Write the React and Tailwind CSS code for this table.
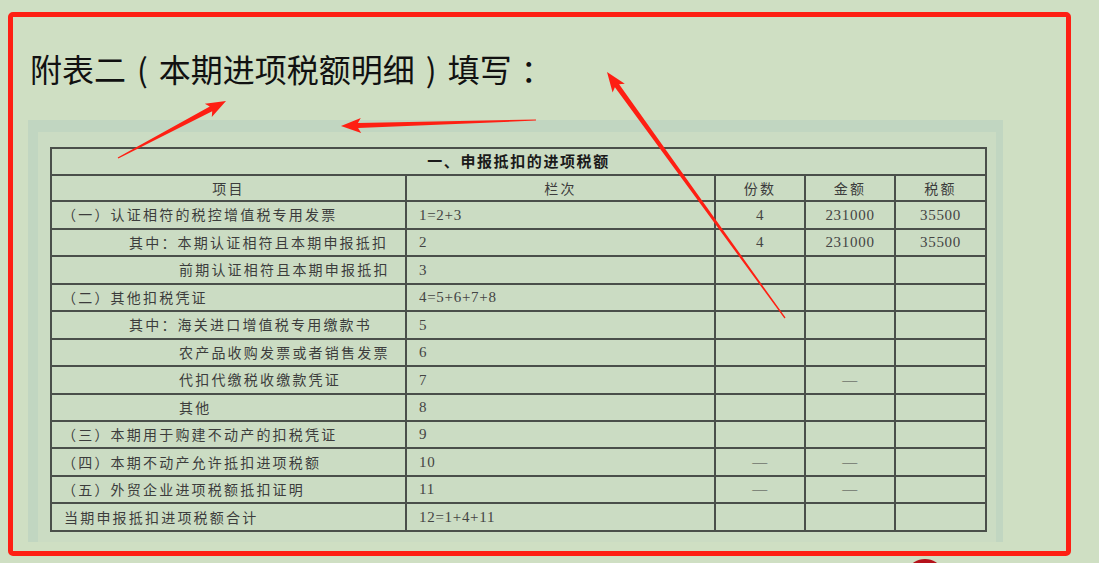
const ROWS = [
  { label: "（一）认证相符的税控增值税专用发票", level: 0, line: "1=2+3", count: "4", amount: "231000", tax: "35500" },
  { label: "其中：本期认证相符且本期申报抵扣", level: 1, line: "2", count: "4", amount: "231000", tax: "35500" },
  { label: "前期认证相符且本期申报抵扣", level: 2, line: "3" },
  { label: "（二）其他扣税凭证", level: 0, line: "4=5+6+7+8" },
  { label: "其中：海关进口增值税专用缴款书", level: 1, line: "5" },
  { label: "农产品收购发票或者销售发票", level: 2, line: "6" },
  { label: "代扣代缴税收缴款凭证", level: 2, line: "7", amount: "—" },
  { label: "其他", level: 2, line: "8" },
  { label: "（三）本期用于购建不动产的扣税凭证", level: 0, line: "9" },
  { label: "（四）本期不动产允许抵扣进项税额", level: 0, line: "10", count: "—", amount: "—" },
  { label: "（五）外贸企业进项税额抵扣证明", level: 0, line: "11", count: "—", amount: "—" },
  { label: "当期申报抵扣进项税额合计", level: 0, line: "12=1+4+11", plain: true },
];

const INDENT = ["pl-[10px]", "pl-[77px]", "pl-[127px]"];

// red annotation arrows: tail -> tip
const ARROWS = [
  { from: [118, 158], to: [226, 101] },
  { from: [536, 120], to: [341, 126] },
  { from: [785, 318], to: [607, 72] },
];

function arrowPoints([tx, ty], [hx, hy]) {
  const dx = hx - tx;
  const dy = hy - ty;
  const len = Math.hypot(dx, dy);
  const ux = dx / len;
  const uy = dy / len;
  const nx = -uy;
  const ny = ux;
  const headLen = 17;
  const bx = hx - ux * headLen;
  const by = hy - uy * headLen;
  const p = (x, y) => `${x.toFixed(1)},${y.toFixed(1)}`;
  return [
    p(tx + nx * 0.6, ty + ny * 0.6),
    p(bx + nx * 2.6, by + ny * 2.6),
    p(bx - ux * 3 + nx * 7.5, by - uy * 3 + ny * 7.5),
    p(hx, hy),
    p(bx - ux * 3 - nx * 7.5, by - uy * 3 - ny * 7.5),
    p(bx - nx * 2.6, by - ny * 2.6),
    p(tx - nx * 0.6, ty - ny * 0.6),
  ].join(" ");
}

const cell = "border-2 border-[#4a4f4a] p-0";
const num = "text-center text-[15px] tracking-[0.7px] text-[#444] [font-family:'Liberation_Serif',serif]";

export default function App() {
  return (
    <div className="relative w-[1099px] h-[563px] overflow-hidden bg-[#cfdfc3] pt-[12px] pl-[8px] [font-family:'Noto_Sans_CJK_SC',sans-serif]">
      <div className="w-[1063px] h-[544px] rounded-[5px] border-[5px] border-[#fe1f13] pt-[29px]">
        <h1 className="pl-[17px] text-[32px] leading-[44px] text-[#111]">
          附表二<span className="mx-[11px]">(</span>本期进项税额明细<span className="mx-[11px]">)</span>填写<span className="ml-[9px]">：</span>
        </h1>

        {/* scanned form */}
        <div className="mt-[30px] ml-[15px] w-[975px] h-[422px] bg-[#c1d6c1] pt-[12px] pl-[10px] pr-[7px]">
          <div className="h-full bg-[#cbdcc3] pl-[12px] pt-[15px]">
            <table className="table-fixed border-collapse w-[935px] h-[385px] text-[14px] tracking-[2.2px] text-[#3c3c3c]">
              <colgroup>
                <col className="w-[355px]" />
                <col className="w-[309px]" />
                <col className="w-[90px]" />
                <col className="w-[90px]" />
                <col className="w-[91px]" />
              </colgroup>
              <tbody>
                <tr>
                  <td colSpan={5} className={`${cell} text-center text-[15px] font-bold tracking-[1.6px] text-[#1a1a1a]`}>
                    一、申报抵扣的进项税额
                  </td>
                </tr>
                <tr>
                  <td className={`${cell} text-center`}>项目</td>
                  <td className={`${cell} text-center`}>栏次</td>
                  <td className={`${cell} text-center`}>份数</td>
                  <td className={`${cell} text-center`}>金额</td>
                  <td className={`${cell} text-center`}>税额</td>
                </tr>
                {ROWS.map((r) => (
                  <tr key={r.line}>
                    <td className={`${cell} whitespace-nowrap ${r.plain ? "pl-[12px]" : INDENT[r.level]}`}>{r.label}</td>
                    <td className={`${cell} pl-[12px] text-[15px] tracking-[0.7px] text-[#444] [font-family:'Liberation_Serif',serif]`}>
                      {r.line}
                    </td>
                    <td className={`${cell} ${num}`}>{r.count}</td>
                    <td className={`${cell} ${num}`}>{r.amount}</td>
                    <td className={`${cell} ${num}`}>{r.tax}</td>
                  </tr>
                ))}
              </tbody>
            </table>
          </div>
        </div>
      </div>

      <svg className="absolute inset-0 pointer-events-none" width="1099" height="563" viewBox="0 0 1099 563">
        {ARROWS.map((a, i) => (
          <polygon key={i} points={arrowPoints(a.from, a.to)} fill="#fe1f13" />
        ))}
        <ellipse cx="925" cy="569" rx="15" ry="10" fill="#b5121b" />
      </svg>
    </div>
  );
}
